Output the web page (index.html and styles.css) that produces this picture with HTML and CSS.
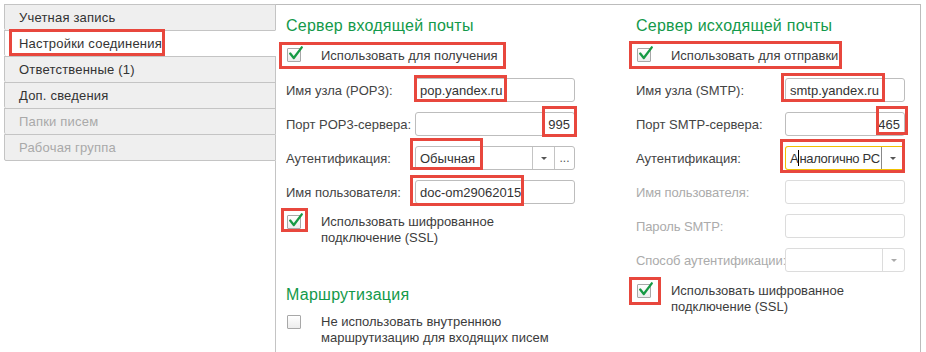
FILE: index.html
```html
<!DOCTYPE html>
<html lang="ru">
<head>
    <meta charset="UTF-8">
    <title>Настройки соединения</title>
    <link rel="stylesheet" href="styles.css">
</head>
<body>
    <div class="window">
        <!-- Tabs -->
        <div class="tabs">
            <div class="tab">Учетная запись</div>
            <div class="tab active">Настройки соединения</div>
            <div class="tab">Ответственные (1)</div>
            <div class="tab">Доп. сведения</div>
            <div class="tab disabled">Папки писем</div>
            <div class="tab disabled last">Рабочая группа</div>
            <div class="tabs-fill"></div>
        </div>

        <!-- Settings panel -->
        <div class="panel">
            <div class="col col-in">
                <h2 class="group-title">Сервер входящей почты</h2>
                <div class="check-row single">
                    <span class="box checked"><svg viewBox="0 0 18 18"><path d="M2.5 8.5 L6.5 13.5 L15.5 1.5"/></svg></span>
                    <span class="check-text">Использовать для получения</span>
                </div>
                <div class="field">
                    <span class="label">Имя узла (POP3):</span>
                    <div class="input">pop.yandex.ru</div>
                </div>
                <div class="field">
                    <span class="label">Порт POP3-сервера:</span>
                    <div class="input num">995</div>
                </div>
                <div class="field">
                    <span class="label">Аутентификация:</span>
                    <div class="input combo">
                        <span class="value">Обычная</span>
                        <span class="btn drop"><i class="caret"></i></span>
                        <span class="btn more">...</span>
                    </div>
                </div>
                <div class="field">
                    <span class="label">Имя пользователя:</span>
                    <div class="input">doc-om29062015</div>
                </div>
                <div class="check-row ssl">
                    <span class="box checked"><svg viewBox="0 0 18 18"><path d="M2.5 8.5 L6.5 13.5 L15.5 1.5"/></svg></span>
                    <span class="check-text">Использовать шифрованное<br>подключение (SSL)</span>
                </div>

                <h2 class="group-title routing">Маршрутизация</h2>
                <div class="check-row route">
                    <span class="box"></span>
                    <span class="check-text">Не использовать внутреннюю<br>маршрутизацию для входящих писем</span>
                </div>
            </div>

            <div class="col col-out">
                <h2 class="group-title">Сервер исходящей почты</h2>
                <div class="check-row single">
                    <span class="box checked"><svg viewBox="0 0 18 18"><path d="M2.5 8.5 L6.5 13.5 L15.5 1.5"/></svg></span>
                    <span class="check-text">Использовать для отправки</span>
                </div>
                <div class="field">
                    <span class="label">Имя узла (SMTP):</span>
                    <div class="input">smtp.yandex.ru</div>
                </div>
                <div class="field">
                    <span class="label">Порт SMTP-сервера:</span>
                    <div class="input num">465</div>
                </div>
                <div class="field">
                    <span class="label">Аутентификация:</span>
                    <div class="input combo focused">
                        <span class="value">А<i class="cursor"></i>налогично РС</span>
                        <span class="btn drop"><i class="caret"></i></span>
                    </div>
                </div>
                <div class="field off">
                    <span class="label">Имя пользователя:</span>
                    <div class="input"></div>
                </div>
                <div class="field off">
                    <span class="label">Пароль SMTP:</span>
                    <div class="input"></div>
                </div>
                <div class="field off">
                    <span class="label">Способ аутентификации:</span>
                    <div class="input combo">
                        <span class="value"></span>
                        <span class="btn drop"><i class="caret"></i></span>
                    </div>
                </div>
                <div class="check-row ssl-out">
                    <span class="box checked"><svg viewBox="0 0 18 18"><path d="M2.5 8.5 L6.5 13.5 L15.5 1.5"/></svg></span>
                    <span class="check-text">Использовать шифрованное<br>подключение (SSL)</span>
                </div>
            </div>
        </div>

        <!-- Red annotation frames over the screenshot -->
        <div class="marks">
            <span class="mark m-tab"></span>
            <span class="mark m-get"></span>
            <span class="mark m-pop"></span>
            <span class="mark m-995"></span>
            <span class="mark m-auth"></span>
            <span class="mark m-user"></span>
            <span class="mark m-ssl"></span>
            <span class="mark m-send"></span>
            <span class="mark m-smtp"></span>
            <span class="mark m-465"></span>
            <span class="mark m-auth2"></span>
            <span class="mark m-ssl2"></span>
        </div>
    </div>
</body>
</html>
```

FILE: styles.css
```css
body {
    margin: 0;
    background: white;
    font-family: "Liberation Sans", Arial, sans-serif;
    font-size: 13px;
    color: #444;
}
.window {
    position: relative;
    display: flex;
    height: 352px;
    padding: 4px 5px 0 4px;
    box-sizing: border-box;
    overflow: hidden;
}

/* tabs */
.tabs {
    width: 272px;
    display: flex;
    flex-direction: column;
}
.tab {
    height: 25px;
    line-height: 25px;
    padding-left: 14px;
    background: #efefef;
    border: 1px solid #c4c4c4;
    border-bottom: none;
    border-radius: 0 0 0 2px;
    color: #333;
    letter-spacing: 0.2px;
}
.tab.active {
    background: white;
    border-right-color: white;
}
.tab.disabled {
    color: #a9a9a9;
}
.tab.last {
    border-bottom: 1px solid #c4c4c4;
}
.tabs-fill {
    flex: 1;
    border-right: 1px solid #c4c4c4;
}

/* panel */
.panel {
    flex: 1;
    display: flex;
    border-top: 1px solid #bcbcbc;
    border-right: 1px solid #bcbcbc;
    padding: 11px 0 0 10px;
}
.col {
    display: flex;
    flex-direction: column;
}
.col-in {
    width: 350px;
}
.col-out {
    width: 270px;
}
.col-in .label {
    width: 129px;
}
.col-in .input {
    width: 160px;
}
.col-out .label {
    width: 149px;
}
.col-out .input {
    width: 120px;
}
.group-title {
    margin: 0;
    font-size: 16px;
    font-weight: normal;
    line-height: 20px;
    color: #13994a;
    letter-spacing: 0.25px;
}
.group-title.routing {
    margin-top: 39px;
}

/* checkboxes */
.check-row {
    display: flex;
    align-items: flex-start;
    line-height: 16px;
}
.check-row.single {
    margin-top: 10px;
    line-height: 20px;
}
.check-row.single .box {
    margin-top: 2px;
}
.check-row.ssl {
    margin-top: 10px;
}
.check-row.ssl-out {
    margin-top: 11px;
}
.check-row.route {
    margin-top: 9px;
}
.box {
    position: relative;
    flex: none;
    width: 12px;
    height: 12px;
    margin: 1px 20px 0 1px;
    border: 1px solid #a8a8a8;
    border-radius: 1px;
    background: linear-gradient(#ffffff, #ececec);
}
.box svg {
    position: absolute;
    left: 0;
    top: -3px;
    width: 16px;
    height: 16px;
}
.box path {
    fill: none;
    stroke: #179a44;
    stroke-width: 2.6;
    stroke-linecap: round;
    stroke-linejoin: round;
}
.check-text {
    color: #3c3c3c;
}

/* fields */
.field {
    display: flex;
    align-items: center;
    height: 24px;
    margin-top: 10px;
}
.check-row.single + .field {
    margin-top: 12px;
}
.label {
    flex: none;
    white-space: nowrap;
}
.input {
    position: relative;
    display: flex;
    align-items: center;
    height: 24px;
    padding: 0 4px;
    border: 1px solid #bdbdbd;
    border-radius: 3px;
    background: white;
    color: #333;
    box-sizing: border-box;
    white-space: nowrap;
}
.input.num {
    justify-content: flex-end;
}
.input.combo {
    padding-right: 0;
}
.combo .value {
    flex: 1;
    min-width: 0;
}
.combo.focused .value {
    letter-spacing: -0.3px;
}
.combo .btn {
    flex: none;
    display: flex;
    align-items: center;
    justify-content: center;
    height: 100%;
    border-left: 1px solid #c4c4c4;
    color: #555;
}
.combo .drop {
    width: 21px;
}
.combo .more {
    width: 19px;
    font-size: 12px;
}
.caret {
    width: 0;
    height: 0;
    border-left: 3px solid transparent;
    border-right: 3px solid transparent;
    border-top: 3px solid #555;
}
.combo.focused {
    border-color: #f0c000;
    border-width: 1px 2px 1px 1px;
}
.combo.focused .drop {
    border-left-color: #888;
}
.cursor {
    display: inline-block;
    width: 1px;
    height: 16px;
    margin-bottom: -3px;
    background: black;
}
.field.off .label {
    color: #ababab;
    letter-spacing: -0.1px;
}
.field.off .input {
    border-color: #dcdcdc;
}
.field.off .btn {
    border-left-color: #dcdcdc;
}
.field.off .caret {
    border-top-color: #aaa;
}

/* annotation frames */
.marks {
    position: absolute;
    inset: 0;
    pointer-events: none;
}
.mark {
    position: absolute;
    border: 3px solid #e8473d;
    box-sizing: border-box;
}
.m-tab { left: 9px; top: 29px; width: 156px; height: 27px; }
.m-get { left: 279px; top: 42px; width: 227px; height: 27px; }
.m-pop { left: 414px; top: 75px; width: 93px; height: 27px; }
.m-995 { left: 542px; top: 106px; width: 35px; height: 31px; }
.m-auth { left: 410px; top: 138px; width: 73px; height: 32px; }
.m-user { left: 410px; top: 175px; width: 114px; height: 31px; }
.m-ssl { left: 281px; top: 208px; width: 27px; height: 24px; }
.m-send { left: 629px; top: 41px; width: 213px; height: 28px; }
.m-smtp { left: 781px; top: 73px; width: 104px; height: 29px; }
.m-465 { left: 876px; top: 106px; width: 32px; height: 29px; }
.m-auth2 { left: 780px; top: 139px; width: 125px; height: 34px; }
.m-ssl2 { left: 629px; top: 277px; width: 32px; height: 28px; }
```
